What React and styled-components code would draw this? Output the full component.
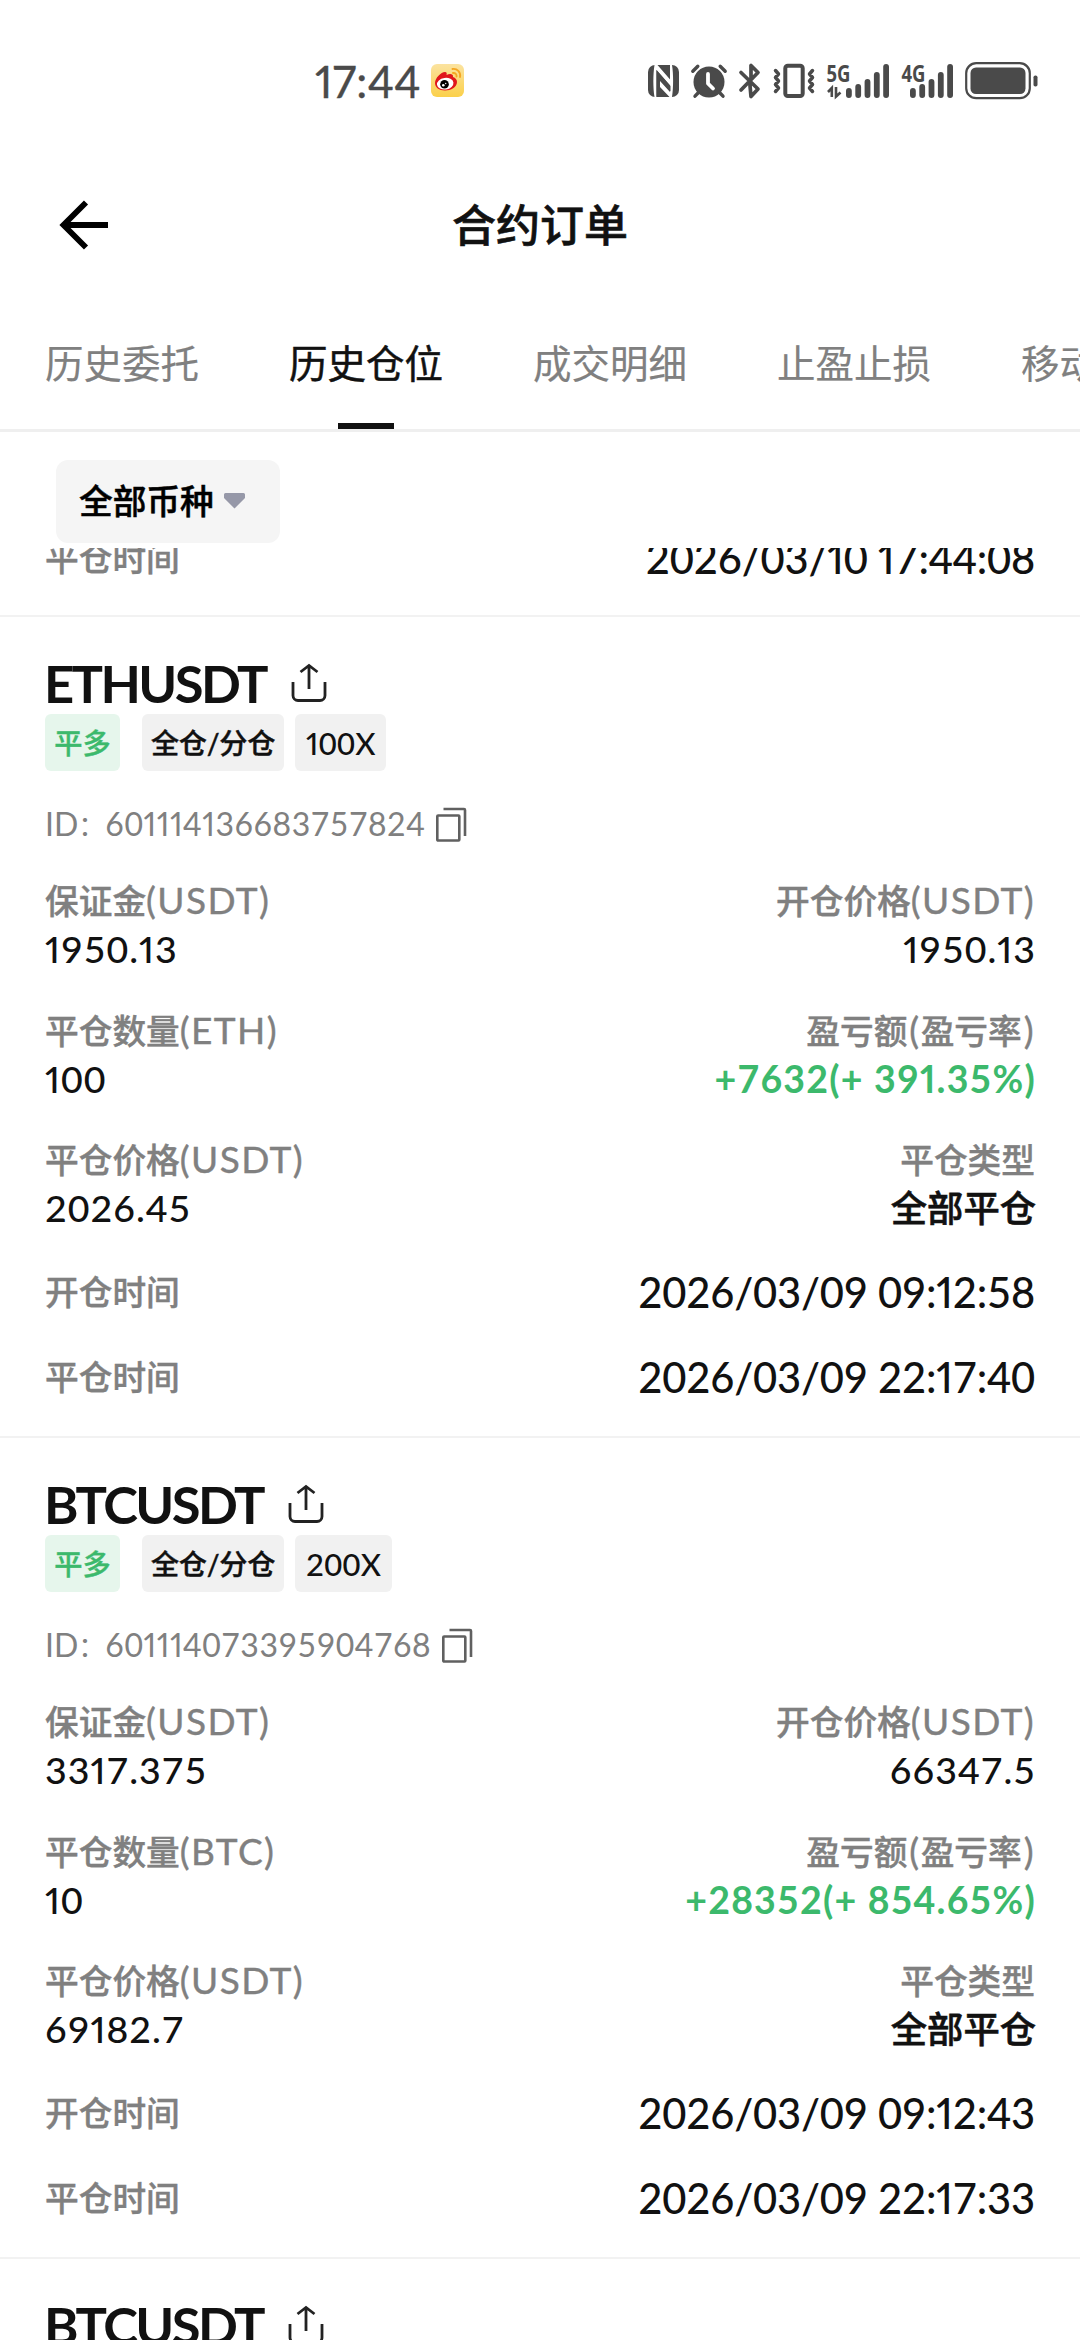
import React from 'react';
import styled, { createGlobalStyle } from 'styled-components';

const colors = {
    text: '#111111',
    muted: '#808080',
    status: '#4a4a4a',
    green: '#3cb96c',
    greenLight: '#e6f6ec',
    tag: '#f1f1f1',
    line: '#f2f2f2',
    white: '#ffffff',
};

const GlobalStyle = createGlobalStyle`
    body {
        margin: 0;
        background-color: ${colors.white};
        color: ${colors.text};
        font-family: Lato, "Noto Sans CJK SC", sans-serif;
        font-variant-numeric: tabular-nums;
    }
    * {
        box-sizing: border-box;
    }
    svg {
        display: block;
        flex-shrink: 0;
        overflow: visible;
    }
`;

const Screen = styled.div`
    width: 1080px;
    height: 2340px;
    display: flex;
    flex-direction: column;
    overflow: hidden;
`;
const StatusBar = styled.div`
    height: 161px;
    padding: 0 42px 0 315px;
    display: flex;
    align-items: center;
    justify-content: space-between;
    color: ${colors.status};
`;
const Clock = styled.div`
    display: flex;
    align-items: center;
    gap: 10px;
    font-size: 44px;
    line-height: 50px;
    letter-spacing: 0.3px;
    font-variant-numeric: proportional-nums;
    -webkit-text-stroke: 0.4px;
`;
const StatusIcons = styled.div`
    display: flex;
    align-items: center;
    gap: 12px;
`;
const Header = styled.div`
    height: 128px;
    padding: 0 60px;
    display: grid;
    grid-template-columns: 48px 1fr 48px;
    align-items: center;
`;
const Title = styled.h1`
    margin: 0;
    font-size: 44px;
    line-height: 64px;
    font-weight: 500;
    text-align: center;
    -webkit-text-stroke: 0.6px;
`;
const Tabs = styled.div`
    height: 143px;
    padding: 0 45px;
    display: flex;
    gap: 90px;
    border-bottom: 3px solid #efefef;
`;
const Tab = styled.div`
    flex-shrink: 0;
    display: flex;
    flex-direction: column;
    justify-content: flex-end;
    align-items: center;
    gap: 32px;
    font-size: 38.5px;
    line-height: 56px;
    white-space: nowrap;
    color: ${props => props.$active ? colors.text : colors.muted};
    -webkit-text-stroke: ${props => props.$active ? '0.5px' : '0.2px'};
    &::after {
        content: '';
        width: 56px;
        height: 6px;
        background-color: ${props => props.$active ? colors.text : 'transparent'};
    }
`;
const FilterBar = styled.div`
    height: 116px;
    padding: 28px 56px 5px;
`;
const FilterButton = styled.div`
    width: 224px;
    height: 83px;
    padding: 0 0 2px 23px;
    display: flex;
    align-items: center;
    gap: 10px;
    border-radius: 12px;
    background-color: #f5f5f5;
    color: #000000;
    font-size: 33.7px;
    line-height: 48px;
    font-weight: 500;
    -webkit-text-stroke: 0.5px;
`;
const List = styled.div`
    flex: 1;
    overflow: hidden;
`;
const Card = styled.div`
    height: 821px;
    padding: 36px 45px 0;
    display: flex;
    flex-direction: column;
    border-bottom: 2px solid ${colors.line};
`;
/* end of the card that is already scrolled under the filter */
const CardTail = styled.div`
    height: 69px;
    padding: 0 45px 29px;
    display: flex;
    flex-direction: column;
    justify-content: flex-end;
    border-bottom: 2px solid ${colors.line};
`;
const Pair = styled.div`
    margin-left: -1px;
    display: flex;
    align-items: center;
    gap: 25px;
    font-size: 52.5px;
    line-height: 60px;
    font-weight: 700;
    letter-spacing: -2.6px;
`;
const TagRow = styled.div`
    margin-top: 1px;
    display: flex;
    gap: 11px;
`;
const Tag = styled.div`
    height: 57px;
    padding: 0 ${props => props.$number ? '10.7px' : '9.2px'};
    margin-right: ${props => props.$side ? '11px' : '0'};
    border-radius: 6px;
    font-size: ${props => props.$number ? '31px' : '28.2px'};
    font-weight: 500;
    line-height: 58px;
    letter-spacing: ${props => props.$number ? '0.3px' : props.$side ? '0' : '-0.3px'};
    color: ${props => props.$side ? colors.green : colors.text};
    background-color: ${props => props.$side ? colors.greenLight : colors.tag};
    -webkit-text-stroke: ${props => props.$number ? '0' : '0.4px'};
`;
const IdRow = styled.div`
    height: 40px;
    margin-top: 33px;
    display: flex;
    align-items: center;
    font-size: 32px;
    line-height: 40px;
    color: ${colors.muted};
`;
const Colon = styled.span`
    font-size: 27px;
    line-height: 1;
`;
const IdNumber = styled.span`
    margin-right: 11px;
    letter-spacing: 0.52px;
`;
const Fields = styled.div`
    margin-top: 33px;
    display: grid;
    grid-template-columns: 1fr 1fr;
    row-gap: 33.5px;
`;
const Field = styled.div`
    text-align: ${props => props.$right ? 'right' : 'left'};
`;
const Label = styled.div`
    font-size: 33.7px;
    line-height: 48px;
    font-weight: 500;
    color: ${colors.muted};
    -webkit-text-stroke: 0.4px;
`;
const Unit = styled.span`
    font-size: 37px;
    font-weight: 400;
    line-height: 1;
    letter-spacing: 1.4px;
`;
const Paren = styled(Unit)`
    margin-left: 2px;
`;
const Value = styled.div`
    margin-right: -1px;
    font-size: ${props => props.$cjk ? '36.3px' : '37.5px'};
    line-height: 48px;
    font-weight: ${props => props.$profit ? 700 : 500};
    letter-spacing: ${props => props.$profit ? '1.2px' : props.$cjk ? '0' : '1px'};
    color: ${props => props.$profit ? colors.green : colors.text};
    -webkit-text-stroke: ${props => props.$cjk ? '0.6px' : '0'};
`;
const TimeRow = styled.div`
    margin-top: ${props => props.$first ? '32px' : '28.5px'};
    display: flex;
    align-items: center;
    justify-content: space-between;
`;
const Time = styled.div`
    font-size: 41.7px;
    line-height: 56px;
    font-weight: 500;
    letter-spacing: -0.2px;
`;
const One = styled.span`
    font-variant-numeric: proportional-nums;
`;

/* even digits with only the narrow one set proportionally */
const Digits = ({ children }) => (
    children.split(/(1)/).map((part, i) => (
        part === '1' ? <One key={i}>1</One> : part
    ))
);

const orders = [
    {
        pair: 'ETHUSDT',
        coin: 'ETH',
        leverage: '100X',
        id: '601114136683757824',
        margin: '1950.13',
        openPrice: '1950.13',
        amount: '100',
        profit: '+7632(+ 391.35%)',
        closePrice: '2026.45',
        openTime: '2026/03/09 09:12:58',
        closeTime: '2026/03/09 22:17:40',
    },
    {
        pair: 'BTCUSDT',
        coin: 'BTC',
        leverage: '200X',
        id: '601114073395904768',
        margin: '3317.375',
        openPrice: '66347.5',
        amount: '10',
        profit: '+28352(+ 854.65%)',
        closePrice: '69182.7',
        openTime: '2026/03/09 09:12:43',
        closeTime: '2026/03/09 22:17:33',
    },
];

const WeiboIcon = () => (
    <svg width="33" height="33" viewBox="0 0 33 33">
        <defs>
            <linearGradient id="weibo" x1="0" y1="0" x2="0" y2="1">
                <stop offset="0" stopColor="#fbe3a0" />
                <stop offset="1" stopColor="#fbd04a" />
            </linearGradient>
        </defs>
        <rect width="33" height="33" rx="6" fill="url(#weibo)" />
        <path d="M4 19c0-5 6-11 10-11 2 0 2 2 1.500 3 3-1.500 7-1.500 6.500 2 2.500 1 4 2.500 4 5 0 5-6 8.500-12 8.500S4 23.500 4 19z" fill="#e0161c" />
        <ellipse cx="14.200" cy="19.700" rx="8.300" ry="5.800" fill="#fff" transform="rotate(-8 14.200 19.700)" />
        <circle cx="13.500" cy="20.300" r="4.300" fill="#000" />
        <circle cx="12.300" cy="21.300" r="1.300" fill="#fff" />
        <circle cx="14.700" cy="19.500" r="0.700" fill="#fff" />
        <path d="M21.500 5c4.500-.8 8.500 3.200 7.500 8M22 9c2.200-.4 4 1.400 3.500 3.500" fill="none" stroke="#f5a623" strokeWidth="1.900" strokeLinecap="round" />
    </svg>
);

const NfcIcon = () => (
    <svg width="31" height="32" viewBox="0 0 31 32">
        <rect width="31" height="32" rx="7" fill={colors.status} />
        <path d="M6.500 0h3l13 15v6L8.500 5v27h-2c-1.500-9-1.500-23 0-32zM24.500 32h-3l-9.500-10v-6l10 11V0h2c1.500 9 1.500 23 0 32z" fill="#fff" />
        <path d="M8.500 5l14 16v5.500L10.500 13v17l-2 2z" fill={colors.status} />
    </svg>
);

const AlarmIcon = () => (
    <svg width="36" height="34" viewBox="0 0 36 34">
        <circle cx="18" cy="18" r="15.500" fill={colors.status} />
        <path d="M1.800 7.300l5-5M34.200 7.300l-5-5M7.500 28.500l-3.500 3.700M28.500 28.500l3.500 3.700" stroke={colors.status} strokeWidth="3.400" strokeLinecap="round" />
        <path d="M17 10v9.500l5 5" fill="none" stroke="#fff" strokeWidth="3.800" strokeLinecap="round" strokeLinejoin="round" />
    </svg>
);

const BluetoothIcon = () => (
    <svg width="22" height="36" viewBox="0 0 22 36">
        <path d="M2 9.500L19 26l-7 7.500-1-11M2 27L19 9.500 12 2.500V16" fill="none" stroke={colors.status} strokeWidth="3.700" strokeLinecap="round" strokeLinejoin="round" />
    </svg>
);

const VibrateIcon = () => (
    <svg width="42" height="36" viewBox="0 0 42 36">
        <rect x="12.300" y="2.800" width="17.400" height="30.200" rx="2.500" fill="none" stroke={colors.status} strokeWidth="4" />
        <path d="M2.500 7.500L5.500 11l-3 3.500 3 3.500-3 3.500 3 3.500-3 3.500M39.500 7.500l-3 3.500 3 3.500-3 3.500 3 3.500-3 3.500 3 3.500" fill="none" stroke={colors.status} strokeWidth="3.500" strokeLinecap="round" strokeLinejoin="round" />
    </svg>
);

const SignalIcon = ({ network, barsFrom, width, arrows }) => (
    <svg width={width} height="36" viewBox={`0 0 ${width} 36`}>
        <text x="-0.500" y="18.500" fontSize="23" fontWeight="700" fontFamily="'Open Sans', sans-serif" textLength="24" lengthAdjust="spacingAndGlyphs" fill={colors.status}>{network}</text>
        {arrows && (
            <path d="M4.800 34V25L1 29M9 24v9.500l4.500-4" fill="none" stroke={colors.status} strokeWidth="2.600" />
        )}
        {[25, 21, 16, 9, 1].map((top, i) => (
            <rect key={top} x={barsFrom + i * 9.3} y={top} width="5.800" height={35 - top} rx="2.900" fill={colors.status} />
        ))}
    </svg>
);

const BatteryIcon = () => (
    <svg width="73" height="38" viewBox="0 0 73 38">
        <rect x="1.200" y="1.200" width="63.600" height="35" rx="10" fill="none" stroke={colors.status} strokeWidth="2.200" />
        <rect x="5.500" y="5.500" width="55" height="26.500" rx="5.500" fill={colors.status} />
        <rect x="68.500" y="13.500" width="4" height="11" rx="1.800" fill={colors.status} />
    </svg>
);

const BackIcon = () => (
    <svg width="50" height="50" viewBox="0 0 50 50">
        <path d="M26 2.500L3.500 25 26 47.500M3.500 25H48" fill="none" stroke="#000" strokeWidth="5.800" />
    </svg>
);

const ShareIcon = () => (
    <svg width="36" height="40" viewBox="0 0 36 40">
        <path d="M2 19v13.500a5 5 0 0 0 5 5h22a5 5 0 0 0 5-5V19M18 26V3M9.500 9L18 2.500 26.500 9" fill="none" stroke="#222" strokeWidth="2.800" />
    </svg>
);

const CopyIcon = () => (
    <svg width="31" height="35" viewBox="0 0 31 35">
        <rect x="1.300" y="8.500" width="22" height="25" rx="0.800" fill="none" stroke="#606060" strokeWidth="2.600" />
        <path d="M7.500 2H28a1 1 0 0 1 1 1v26" fill="none" stroke="#606060" strokeWidth="2.600" />
    </svg>
);

const Order = ({ order }) => (
    <Card>
        <Pair>
            {order.pair}
            <ShareIcon />
        </Pair>
        <TagRow>
            <Tag $side>平多</Tag>
            <Tag>全仓/分仓</Tag>
            <Tag $number><Digits>{order.leverage}</Digits></Tag>
        </TagRow>
        <IdRow>
            <span>ID<Colon>：</Colon></span>
            <IdNumber><Digits>{order.id}</Digits></IdNumber>
            <CopyIcon />
        </IdRow>
        <Fields>
            <Field>
                <Label>保证金<Unit>(USDT)</Unit></Label>
                <Value><Digits>{order.margin}</Digits></Value>
            </Field>
            <Field $right>
                <Label>开仓价格<Unit>(USDT)</Unit></Label>
                <Value><Digits>{order.openPrice}</Digits></Value>
            </Field>
            <Field>
                <Label>平仓数量<Unit>({order.coin})</Unit></Label>
                <Value><Digits>{order.amount}</Digits></Value>
            </Field>
            <Field $right>
                <Label>盈亏额<Paren>(</Paren>盈亏率<Paren>)</Paren></Label>
                <Value $profit><Digits>{order.profit}</Digits></Value>
            </Field>
            <Field>
                <Label>平仓价格<Unit>(USDT)</Unit></Label>
                <Value><Digits>{order.closePrice}</Digits></Value>
            </Field>
            <Field $right>
                <Label>平仓类型</Label>
                <Value $cjk>全部平仓</Value>
            </Field>
        </Fields>
        <TimeRow $first>
            <Label>开仓时间</Label>
            <Time><Digits>{order.openTime}</Digits></Time>
        </TimeRow>
        <TimeRow>
            <Label>平仓时间</Label>
            <Time><Digits>{order.closeTime}</Digits></Time>
        </TimeRow>
    </Card>
);

const App = () => (
    <Screen>
        <GlobalStyle />
        <StatusBar>
            <Clock>
                17:44
                <WeiboIcon />
            </Clock>
            <StatusIcons>
                <NfcIcon />
                <AlarmIcon />
                <BluetoothIcon />
                <VibrateIcon />
                <SignalIcon network="5G" barsFrom={19} width={63} arrows />
                <SignalIcon network="4G" barsFrom={8} width={51} />
                <BatteryIcon />
            </StatusIcons>
        </StatusBar>
        <Header>
            <BackIcon />
            <Title>合约订单</Title>
        </Header>
        <Tabs>
            <Tab>历史委托</Tab>
            <Tab $active>历史仓位</Tab>
            <Tab>成交明细</Tab>
            <Tab>止盈止损</Tab>
            <Tab>移动</Tab>
        </Tabs>
        <FilterBar>
            <FilterButton>
                全部币种
                <svg width="21" height="16" viewBox="0 0 21 16">
                    <path d="M1.500 0h18a1.500 1.500 0 0 1 1.500 1.500V5L10.500 15.500 0 5V1.500A1.500 1.500 0 0 1 1.500 0z" fill="#9698a8" />
                </svg>
            </FilterButton>
        </FilterBar>
        <List>
            <CardTail>
                <TimeRow>
                    <Label>平仓时间</Label>
                    <Time><Digits>2026/03/10 17:44:08</Digits></Time>
                </TimeRow>
            </CardTail>
            {orders.map(order => (
                <Order key={order.id} order={order} />
            ))}
            <Card>
                <Pair>
                    BTCUSDT
                    <ShareIcon />
                </Pair>
            </Card>
        </List>
    </Screen>
);

export default App;
